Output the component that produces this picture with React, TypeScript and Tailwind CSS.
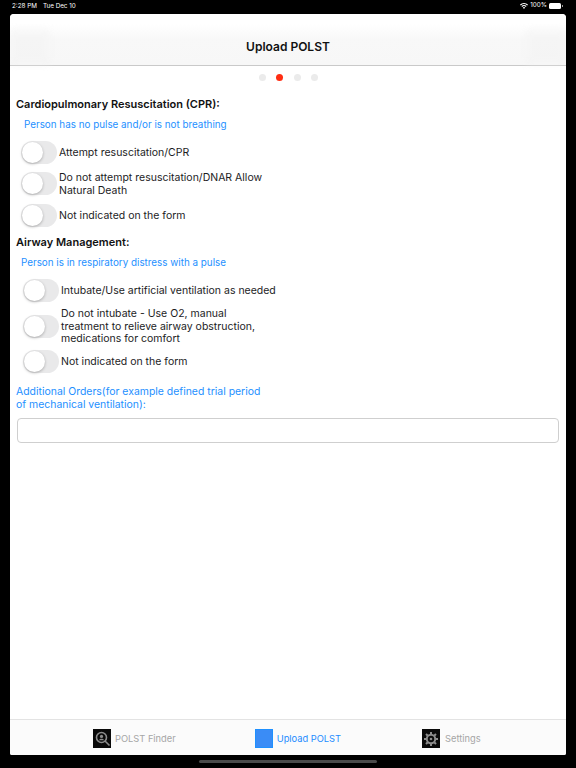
const F = "font-['Inter','Liberation_Sans',sans-serif]";

function Toggle() {
  return (
    <div className="w-[36px] h-[23px] rounded-full bg-[#e9e9ea] shrink-0">
      <div className="w-[21px] h-[21px] mt-px ml-px rounded-full bg-white shadow-[0_1px_3px_rgba(0,0,0,0.28)]" />
    </div>
  );
}

function Row({ text, cls }: { text: React.ReactNode; cls: string }) {
  return (
    <div className={`flex items-center gap-[2px] ${cls}`}>
      <Toggle />
      <div className="w-[230px] pt-[2px] text-[10.5px] leading-[12.7px] text-[#1c1c1e]">{text}</div>
    </div>
  );
}

function Texture() {
  return <div className="w-[40px] h-full bg-[#f1f1f1] opacity-40 blur-[3px]" />;
}

export default function App() {
  return (
    <div className={`${F} w-[576px] h-[768px] bg-black flex flex-col overflow-hidden`}>
      <div className="h-[14px] shrink-0 flex items-center justify-between pl-[12px] pr-[13px] text-white text-[6.3px]">
        <div className="flex gap-[6px] -mt-[1px]"><span>2:28 PM</span><span>Tue Dec 10</span></div>
        <div className="flex items-center gap-[2px] -mt-[2px]">
          <svg width="8" height="6" viewBox="0 0 16 12" fill="white"><path d="M8 12 5.6 9.2a3.4 3.4 0 0 1 4.8 0zM4.3 7.8 2.9 6.2a7.4 7.4 0 0 1 10.2 0l-1.4 1.6a5.3 5.3 0 0 0-7.4 0zM1.6 4.8 0 3.2a11.6 11.6 0 0 1 16 0l-1.6 1.6a9.4 9.4 0 0 0-12.8 0z" /></svg>
          <span>100%</span>
          <div className="w-[12px] h-[6px] rounded-[1.5px] bg-white" />
          <div className="w-px h-[2px] bg-white/60 -ml-px" />
        </div>
      </div>
      <div className="mx-[10px] h-[741px] shrink-0 rounded-t-[4px] rounded-b-[2px] bg-white flex flex-col overflow-hidden">
        <div className="h-[52px] shrink-0 border-b border-[#c9c9c9] bg-gradient-to-b from-white from-20% via-[#f8f8f8] via-50% to-[#f7f7f7] flex items-end justify-between">
          <div className="h-[36px]"><Texture /></div>
          <div className="text-[12px] font-semibold text-[#111] pb-[10px] leading-[16px]">Upload POLST</div>
          <div className="h-[36px]"><Texture /></div>
        </div>
        <div className="flex justify-center gap-[10.5px] mt-[8px] ml-[1px] h-[7px] shrink-0">
          <div className="w-[7px] h-[7px] rounded-full bg-[#ebebeb]" />
          <div className="w-[7px] h-[7px] rounded-full bg-[#ff2d12]" />
          <div className="w-[7px] h-[7px] rounded-full bg-[#ebebeb]" />
          <div className="w-[7px] h-[7px] rounded-full bg-[#ebebeb]" />
        </div>
        <div className="flex-1 flex flex-col">
          <div className="ml-[6px] mt-[16px] text-[11px] leading-[14px] font-semibold text-[#111]">Cardiopulmonary Resuscitation (CPR):</div>
          <div className="ml-[14px] mt-[6px] text-[9.85px] leading-[14px] text-[#1e90ff]">Person has no pulse and/or is not breathing</div>
          <div className="mt-[10px] flex flex-col ml-[11px]">
            <Row cls="h-[23px]" text="Attempt resuscitation/CPR" />
            <Row cls="h-[25px] mt-[7px]" text={<>Do not attempt resuscitation/DNAR Allow<br />Natural Death</>} />
            <Row cls="h-[23px] mt-[8px]" text="Not indicated on the form" />
          </div>
          <div className="ml-[6px] mt-[8px] text-[11px] leading-[14px] font-semibold text-[#111]">Airway Management:</div>
          <div className="ml-[11px] mt-[6px] text-[9.85px] leading-[14px] text-[#1e90ff]">Person is in respiratory distress with a pulse</div>
          <div className="mt-[10px] flex flex-col ml-[13px]">
            <Row cls="h-[23px]" text="Intubate/Use artificial ventilation as needed" />
            <Row cls="h-[38px] mt-[5px]" text={<>Do not intubate - Use O2, manual<br />treatment to relieve airway obstruction,<br />medications for comfort</>} />
            <Row cls="h-[23px] mt-[5px]" text="Not indicated on the form" />
          </div>
          <div className="ml-[6px] mt-[13px] text-[10.45px] leading-[12.7px] text-[#1e90ff]">Additional Orders(for example defined trial period<br />of mechanical ventilation):</div>
          <div className="mx-[7px] mt-[7px] h-[25px] rounded-[4px] border border-[#cfcfcf] bg-white" />
        </div>
        <div className="h-[36px] shrink-0 border-t border-[#e3e3e3] bg-[#fbfbfb] flex items-center text-[9.3px] pt-[2px]">
          <div className="ml-[83px] flex items-center gap-[4px] text-[#a6a6a6]">
            <div className="w-[18px] h-[19px] bg-[#0a0a0a] flex items-center justify-center">
              <svg width="17" height="17" viewBox="0 0 17 17" fill="none"><circle cx="7.5" cy="7.5" r="5" stroke="#8c8c8c" strokeWidth="1.6" /><path d="M11 11l4.5 4.5" stroke="#8c8c8c" strokeWidth="1.6" /><circle cx="7.5" cy="6.4" r="1.6" fill="#8c8c8c" /><path d="M5 10.2c.3-2 4.7-2 5 0z" fill="#8c8c8c" /></svg>
            </div>
            <span>POLST Finder</span>
          </div>
          <div className="ml-[79px] flex items-center gap-[4px] text-[#1e8cff]">
            <div className="w-[18px] h-[19px] bg-[#3a8cf6] border border-[#1e90ff]" />
            <span>Upload POLST</span>
          </div>
          <div className="ml-[81px] flex items-center gap-[5px] text-[#a6a6a6]">
            <div className="w-[18px] h-[19px] bg-[#0a0a0a] flex items-center justify-center">
              <svg width="16" height="16" viewBox="0 0 16 16" fill="none"><circle cx="8" cy="8" r="4.2" stroke="#8c8c8c" strokeWidth="2" /><circle cx="8" cy="8" r="1.3" fill="#8c8c8c" /><path d="M8 1v2.5M8 12.5V15M1 8h2.5M12.5 8H15M3 3l1.8 1.8M11.2 11.2 13 13M13 3l-1.8 1.8M4.8 11.2 3 13" stroke="#8c8c8c" strokeWidth="2" /></svg>
            </div>
            <span>Settings</span>
          </div>
        </div>
      </div>
      <div className="flex-1 flex items-center justify-center">
        <div className="w-[178px] h-[3px] rounded-full bg-[#4a4a4a]" />
      </div>
    </div>
  );
}
